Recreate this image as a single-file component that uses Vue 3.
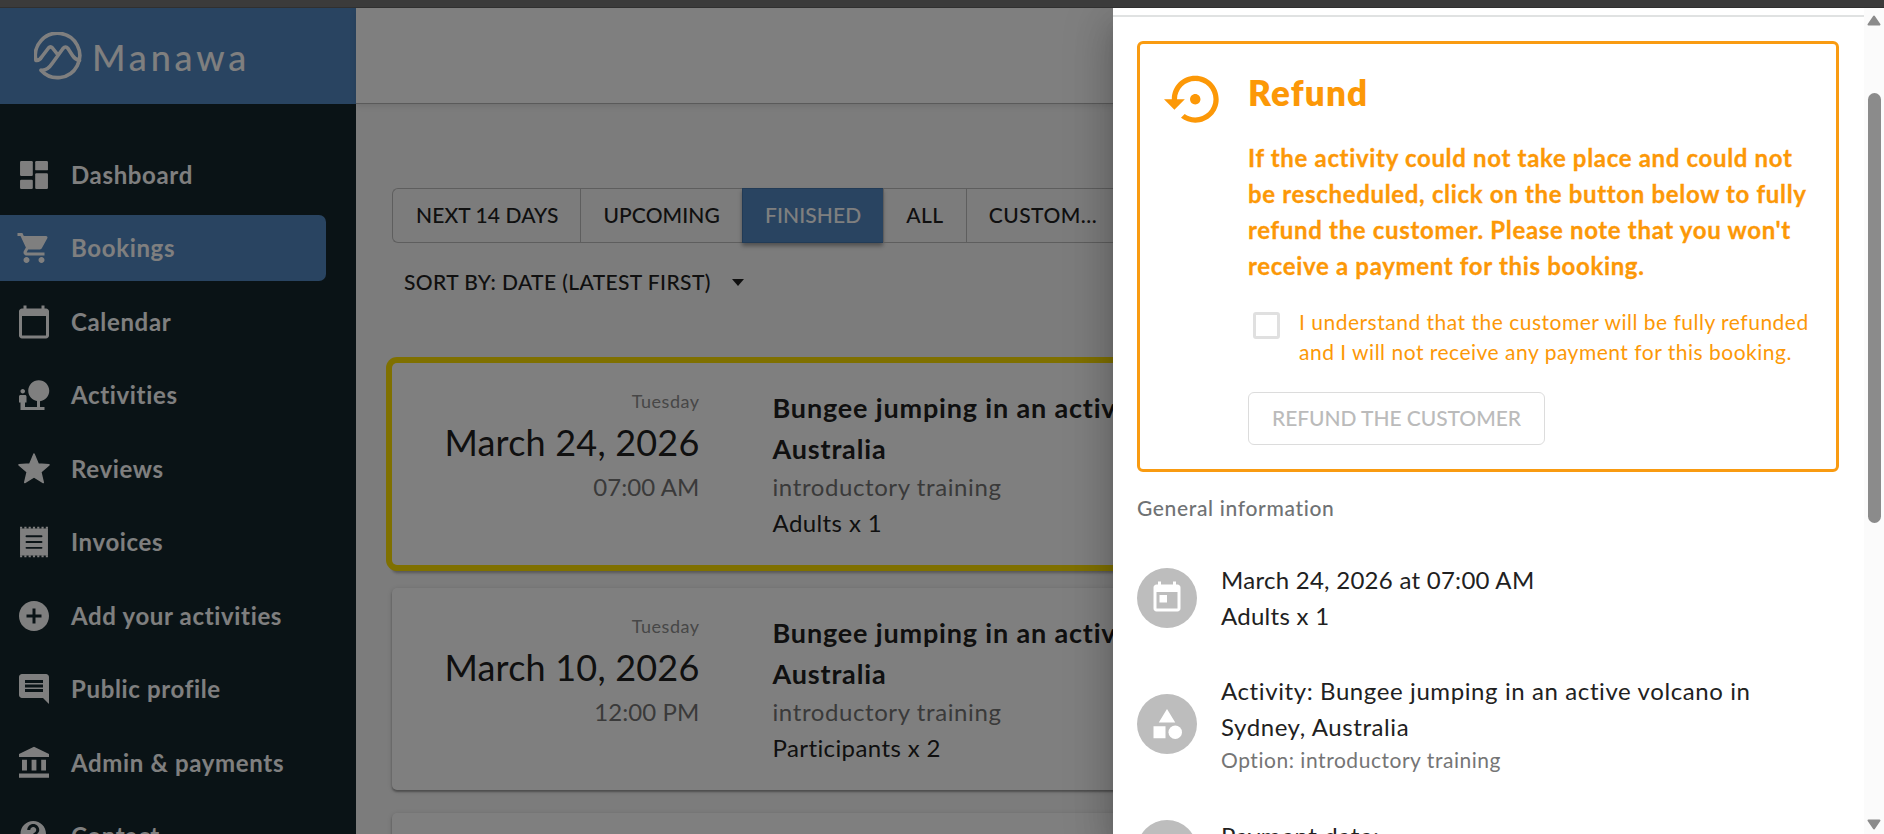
<script setup>
const menu = [
  { name: 'dashboard', label: 'Dashboard' },
  { name: 'bookings', label: 'Bookings', active: true },
  { name: 'calendar', label: 'Calendar' },
  { name: 'activities', label: 'Activities' },
  { name: 'reviews', label: 'Reviews' },
  { name: 'invoices', label: 'Invoices' },
  { name: 'add', label: 'Add your activities' },
  { name: 'profile', label: 'Public profile' },
  { name: 'admin', label: 'Admin & payments' },
  { name: 'contact', label: 'Contact' },
]

// Plain one-path icons, 24x24 grid
const paths = {
  bookings: 'M7 18c-1.1 0-1.99.9-1.99 2S5.9 22 7 22s2-.9 2-2-.9-2-2-2zM1 2v2h2l3.6 7.59-1.35 2.45c-.16.28-.25.61-.25.96 0 1.1.9 2 2 2h12v-2H7.42c-.14 0-.25-.11-.25-.25l.03-.12.9-1.63h7.45c.75 0 1.41-.41 1.75-1.03l3.58-6.49A1 1 0 0 0 20.01 4H5.21l-.94-2H1zm16 16c-1.1 0-1.99.9-1.99 2s.89 2 1.99 2 2-.9 2-2-.9-2-2-2z',
  calendar: 'M20 3h-1V1h-2v2H7V1H5v2H4c-1.1 0-2 .9-2 2v16c0 1.1.9 2 2 2h16c1.1 0 2-.9 2-2V5c0-1.1-.9-2-2-2zm0 18H4V8h16v13z',
  activities: 'M22.17 9.17c0-3.87-3.13-7-7-7s-7 3.13-7 7c0 3.47 2.52 6.34 5.83 6.89V20H6v-3h1v-4c0-.55-.45-1-1-1H3c-.55 0-1 .45-1 1v4h1v5h16v-2h-3v-3.88c3.47-.41 6.17-3.36 6.17-6.95zM4.5 11c.83 0 1.5-.67 1.5-1.5S5.33 8 4.5 8 3 8.67 3 9.5 3.67 11 4.5 11z',
  add: 'M12 2C6.48 2 2 6.48 2 12s4.48 10 10 10 10-4.48 10-10S17.52 2 12 2zm5 11h-4v4h-2v-4H7v-2h4V7h2v4h4v2z',
  profile: 'M21.99 4c0-1.1-.89-2-1.99-2H4c-1.1 0-2 .9-2 2v12c0 1.1.9 2 2 2h14l4 4-.01-18zM18 14H6v-2h12v2zm0-3H6V9h12v2zm0-3H6V6h12v2z',
  admin: 'M4 9.8v7.2h3.3V9.8zM10.4 9.8v7.2h3.2V9.8zM16.8 9.8v7.2H20V9.8zM2 19v2.8h20V19zM12 1.2 2 6v2h20V6z',
  contact: 'M11.5 2C6.81 2 3 5.81 3 10.5S6.81 19 11.5 19h.5v3c4.86-2.34 8-7 8-11.5C20 5.81 16.19 2 11.5 2zm1 14.5h-2v-2h2v2zm.4-4.81c-.33.4-.4.81-.4 1.31h-2c0-3.25 3-3 3-5 0-1.1-.9-2-2-2s-2 .9-2 2h-2c0-2.21 1.79-4 4-4s4 1.79 4 4c0 2-1.9 2.8-2.6 3.69z',
}

const tabs = ['Next 14 days', 'Upcoming', 'Finished', 'All', 'Custom...']

const bookings = [
  { date: 'March 24, 2026', time: '07:00 AM', people: 'Adults x 1', selected: true },
  { date: 'March 10, 2026', time: '12:00 PM', people: 'Participants x 2' },
]
</script>

<template>
  <div class="screen">
    <div class="window-edge"></div>

    <div class="app">
      <aside class="sidebar">
        <div class="brand">
          <svg class="brand-mark" viewBox="0 0 48 48">
            <path d="M1.9 28.3A22.2 22.2 0 1 1 7 38.2M1.9 28.3C5 29 6.5 27 8 24.5L14.5 16Q16.5 13.8 18.5 16L24 23M7 38.2C12 39 15.5 35.500 18.500 31L29 16.500Q31.500 13.500 34 16.500L38.500 23.500Q41 27.500 45.500 28.500" />
          </svg>
          <span class="brand-name">Manawa</span>
        </div>
        <nav class="menu">
          <a v-for="item in menu" :key="item.name" class="menu-item" :class="{ active: item.active }">
            <svg class="menu-icon" viewBox="0 0 24 24">
              <g v-if="item.name === 'dashboard'">
                <rect x="2.7" y="2.7" width="8.5" height="10" rx=".8" />
                <rect x="12.8" y="2.7" width="8.5" height="6.2" rx=".8" />
                <rect x="2.7" y="15.1" width="8.5" height="6.2" rx=".8" />
                <rect x="12.8" y="10.8" width="8.5" height="10.5" rx=".8" />
              </g>
              <path
                v-else-if="item.name === 'reviews'"
                class="star"
                d="M12 17.27 18.18 21l-1.64-7.03L22 9.24l-7.19-.61L12 2 9.19 8.63 2 9.24l5.46 4.73L5.82 21z"
              />
              <g v-else-if="item.name === 'invoices'">
                <rect x="2.7" y="3" width="18.6" height="18" />
                <path class="teeth" d="M2.7 2.5h18.6M2.7 21.5h18.6" />
                <path class="lines" d="M7 8.1h10M7 12h10M7 15.9h10" />
              </g>
              <path v-else :d="paths[item.name]" />
            </svg>
            <span>{{ item.label }}</span>
          </a>
        </nav>
      </aside>

      <main class="main">
        <header class="topbar"></header>
        <div class="content">
          <div class="tabs">
            <button v-for="tab in tabs" :key="tab" class="tab" :class="{ current: tab === 'Finished' }">{{ tab }}</button>
          </div>
          <div class="sort">
            <span>Sort by: date (latest first)</span>
            <i class="caret"></i>
          </div>
          <article v-for="b in bookings" :key="b.date" class="booking" :class="{ selected: b.selected }">
            <div class="when">
              <div class="weekday">Tuesday</div>
              <div class="date">{{ b.date }}</div>
              <div class="time">{{ b.time }}</div>
            </div>
            <div class="what">
              <div class="title">Bungee jumping in an activ<br />Australia</div>
              <div class="option">introductory training</div>
              <div class="people">{{ b.people }}</div>
            </div>
          </article>
          <article class="booking"></article>
        </div>
      </main>

      <div class="backdrop"></div>

      <section class="drawer">
        <div class="drawer-body">
          <div class="divider"></div>
          <div class="refund">
            <svg class="refund-icon" viewBox="0 0 24 24">
              <path d="M14 12c0-1.1-.9-2-2-2s-2 .9-2 2 .9 2 2 2 2-.9 2-2zm-2-9c-4.97 0-9 4.03-9 9H0l4 4 4-4H5c0-3.87 3.13-7 7-7s7 3.13 7 7-3.13 7-7 7c-1.51 0-2.91-.49-4.06-1.3l-1.42 1.44C8.04 20.3 9.94 21 12 21c4.97 0 9-4.03 9-9s-4.03-9-9-9z" />
            </svg>
            <div>
              <h2>Refund</h2>
              <p class="notice">
                If the activity could not take place and could not<br />
                be rescheduled, click on the button below to fully<br />
                refund the customer. Please note that you won't<br />
                receive a payment for this booking.
              </p>
              <label class="consent">
                <span class="checkbox"></span>
                <span>I understand that the customer will be fully refunded<br />and I will not receive any payment for this booking.</span>
              </label>
              <button class="refund-button" disabled>Refund the customer</button>
            </div>
          </div>

          <h3>General information</h3>
          <ul class="info">
            <li>
              <span class="avatar">
                <svg viewBox="0 0 24 24"><path d="M19 3h-1V1h-2v2H8V1H6v2H5c-1.11 0-1.99.9-1.99 2L3 19c0 1.1.89 2 2 2h14c1.1 0 2-.9 2-2V5c0-1.1-.9-2-2-2zm0 16H5V8h14v11zM7 10h5v5H7z" /></svg>
              </span>
              <div>
                <div class="tight">March 24, 2026 at 07:00 AM</div>
                <div class="tight">Adults x 1</div>
              </div>
            </li>
            <li>
              <span class="avatar">
                <svg viewBox="0 0 24 24">
                  <path d="M12 2 6.5 11h11zM3 13.5h8v8H3z" />
                  <circle cx="17.5" cy="17.5" r="4.5" />
                </svg>
              </span>
              <div>
                <div>Activity: Bungee jumping in an active volcano in<br />Sydney, Australia</div>
                <div class="small">Option: introductory training</div>
              </div>
            </li>
            <li>
              <span class="avatar"></span>
              <div class="payment">Payment date:</div>
            </li>
          </ul>
        </div>

        <div class="scrollbar">
          <svg class="arrow" viewBox="0 0 14 11"><path d="M7 1.5 12.5 9.5h-11z" /></svg>
          <div class="thumb"></div>
          <svg class="arrow down" viewBox="0 0 14 11"><path d="M7 9.5 12.5 1.5h-11z" /></svg>
        </div>
      </section>
    </div>
  </div>
</template>

<style>
body {
  overflow: hidden;
}
</style>

<style scoped>
* {
  box-sizing: border-box;
}

.screen {
  display: flex;
  flex-direction: column;
  height: 100vh;
  font: 400 24px/36px Lato, 'Open Sans', sans-serif;
  letter-spacing: 0.6px;
  color: #212121;
}

.window-edge {
  flex: none;
  height: 8px;
  background: #3b3b3b;
  border-bottom: 1px solid #303030;
}

.app {
  position: relative;
  flex: 1;
  display: flex;
  min-height: 0;
  overflow: hidden;
}

/* Sidebar */
.sidebar {
  flex: none;
  width: 356px;
  background: #15262c;
  color: #fff;
}

.brand {
  display: flex;
  align-items: center;
  height: 95.5px;
  padding-left: 34px;
  background: #5288c2;
}

.brand-mark {
  width: 48px;
  height: 48px;
  fill: none;
  stroke: #fff;
  stroke-width: 3.6;
  stroke-linecap: round;
  stroke-linejoin: round;
}

.brand-name {
  margin: 2px 0 0 10px;
  font-size: 36px;
  font-weight: 500;
  letter-spacing: 3.8px;
}

.menu {
  display: flex;
  flex-direction: column;
  gap: 7.5px;
  padding-top: 38px;
}

.menu-item {
  display: flex;
  align-items: center;
  flex: none;
  width: 326px;
  height: 66px;
  padding-left: 16px;
  border-radius: 0 7px 7px 0;
  font-weight: 700;
  letter-spacing: 0.65px;
}

.menu-item span {
  margin-left: 19px;
}

.menu-item.active {
  background: #5288c2;
}

.menu-icon {
  width: 36px;
  height: 36px;
  fill: #fff;
}

.star {
  stroke: #fff;
  stroke-width: 1;
  stroke-linejoin: round;
}

.teeth {
  stroke: #fff;
  stroke-width: 1.4;
  stroke-dasharray: 1.43;
}

.lines {
  stroke: #15262c;
  stroke-width: 1.3;
  stroke-linecap: round;
}

/* Bookings list */
.main {
  flex: none;
  width: 1528px;
  background: #f8f8f8;
}

.topbar {
  height: 95.5px;
  background: #fff;
  border-bottom: 1px solid #b5b5b5;
  box-shadow: 0 2px 6px rgba(0, 0, 0, 0.1);
}

.content {
  padding: 84.5px 36px 0;
}

.tabs {
  display: flex;
  height: 55px;
}

.tab {
  padding: 0 22px 2px;
  border: 1px solid #bdbdbd;
  border-right-width: 0;
  background: none;
  color: inherit;
  font: 500 21px/36px Lato, sans-serif;
  letter-spacing: 0.1px;
  text-transform: uppercase;
}

.tab:first-child {
  padding-left: 23px;
  border-radius: 6px 0 0 6px;
}

.tab:nth-child(n + 4) {
  letter-spacing: 0.5px;
}

.tab.current {
  border-color: #4577ad;
  background: #5288c2;
  color: #fff;
  box-shadow: 0 3px 4px rgba(0, 0, 0, 0.35);
}

.sort {
  display: flex;
  align-items: center;
  margin: 21px 0 63px 12px;
  font-size: 21px;
  font-weight: 500;
  letter-spacing: 0.4px;
  text-transform: uppercase;
}

.caret {
  margin-left: 21px;
  border: 6.5px solid transparent;
  border-top: 7px solid #212121;
  border-bottom: 0;
}

.booking {
  display: flex;
  gap: 73px;
  height: 202px;
  margin-bottom: 23px;
  padding-top: 25px;
  border-radius: 5px;
  background: #fff;
  box-shadow: 0 2px 2px rgba(0, 0, 0, 0.3), 0 1px 5px rgba(0, 0, 0, 0.16);
}

.booking.selected {
  box-shadow: 0 0 0 6px #ffe000, 0 8px 3px rgba(0, 0, 0, 0.3);
}

.when {
  width: 307.5px;
  text-align: right;
}

.weekday {
  font-size: 18px;
  line-height: 27px;
  letter-spacing: 0.5px;
  color: #8e8e8e;
}

.date {
  font-size: 36px;
  line-height: 54px;
  letter-spacing: 0.2px;
}

.time {
  letter-spacing: 0.1px;
  color: #757575;
}

.title {
  font-size: 27px;
  font-weight: 700;
  line-height: 40.5px;
  letter-spacing: 0.83px;
  white-space: nowrap;
}

.option {
  color: #757575;
}

.people {
  letter-spacing: 0.4px;
}

.backdrop {
  position: absolute;
  inset: 0;
  background: rgba(0, 0, 0, 0.5);
}

/* Details drawer */
.drawer {
  position: absolute;
  inset: 0 0 0 auto;
  display: flex;
  width: 771px;
  background: #fff;
  box-shadow: 0 12px 15px -8px rgba(0, 0, 0, 0.2), 0 24px 36px 3px rgba(0, 0, 0, 0.14), 0 9px 45px 8px rgba(0, 0, 0, 0.12);
}

.drawer-body {
  width: 751px;
  overflow: hidden;
}

.divider {
  height: 9px;
  border-bottom: 2px solid #e0e2e2;
}

.refund {
  display: flex;
  height: 431px;
  margin: 24px 25px 0 24px;
  padding: 24px 0 0 24px;
  border: 3px solid #f99b11;
  border-radius: 6px;
  color: #fc9807;
}

.refund-icon {
  flex: none;
  width: 62.5px;
  height: 62.5px;
  margin-right: 21.5px;
  fill: currentColor;
}

h2 {
  margin: 3px 0 27px;
  font-size: 35px;
  font-weight: 800;
  line-height: 42px;
  letter-spacing: 1.2px;
}

.notice {
  margin: 0 0 23px;
  font-weight: 700;
  letter-spacing: 0.67px;
  white-space: nowrap;
  -webkit-text-stroke: 0.3px currentColor;
}

.consent {
  display: flex;
  font-size: 21px;
  line-height: 30px;
  letter-spacing: 0.5px;
  white-space: nowrap;
}

.checkbox {
  width: 27px;
  height: 27px;
  margin: 5px 19px 0 5px;
  border: 3px solid #e0e0e0;
  border-radius: 3px;
}

.refund-button {
  height: 53px;
  margin-top: 25px;
  padding: 0 23px 1px;
  border: 1px solid #dcdcdc;
  border-radius: 6px;
  background: none;
  color: #bbb;
  font: 500 21px/36px Lato, sans-serif;
  letter-spacing: -0.05px;
  text-transform: uppercase;
}

h3 {
  margin: 18px 24px 9px;
  font-size: 21px;
  font-weight: 500;
  line-height: 36px;
  letter-spacing: 0.65px;
  color: #6f7274;
}

.info {
  margin: 0;
  padding: 0 24px;
  list-style: none;
}

.info li {
  display: flex;
  align-items: center;
  gap: 24px;
  height: 126px;
}

.avatar {
  display: flex;
  align-items: center;
  justify-content: center;
  width: 60px;
  height: 60px;
  border-radius: 50%;
  background: #bdbdbd;
}

.avatar svg {
  width: 36px;
  height: 36px;
  fill: #fff;
}

.tight {
  letter-spacing: 0.27px;
}

.small {
  font-size: 21px;
  line-height: 30px;
  letter-spacing: 0.54px;
  color: #757575;
}

.payment {
  align-self: flex-start;
  margin-top: 31px;
}

.scrollbar {
  display: flex;
  flex-direction: column;
  align-items: center;
  width: 20px;
  padding: 7px 0 4px;
  background: #fbfbfb;
}

.arrow {
  flex: none;
  width: 14px;
  height: 11px;
  fill: #8b8b8b;
  stroke: #8b8b8b;
  stroke-width: 2;
  stroke-linejoin: round;
}

.thumb {
  width: 13px;
  height: 430px;
  margin-top: 67px;
  border-radius: 7px;
  background: #8b8b8b;
}

.down {
  margin-top: auto;
}
</style>
